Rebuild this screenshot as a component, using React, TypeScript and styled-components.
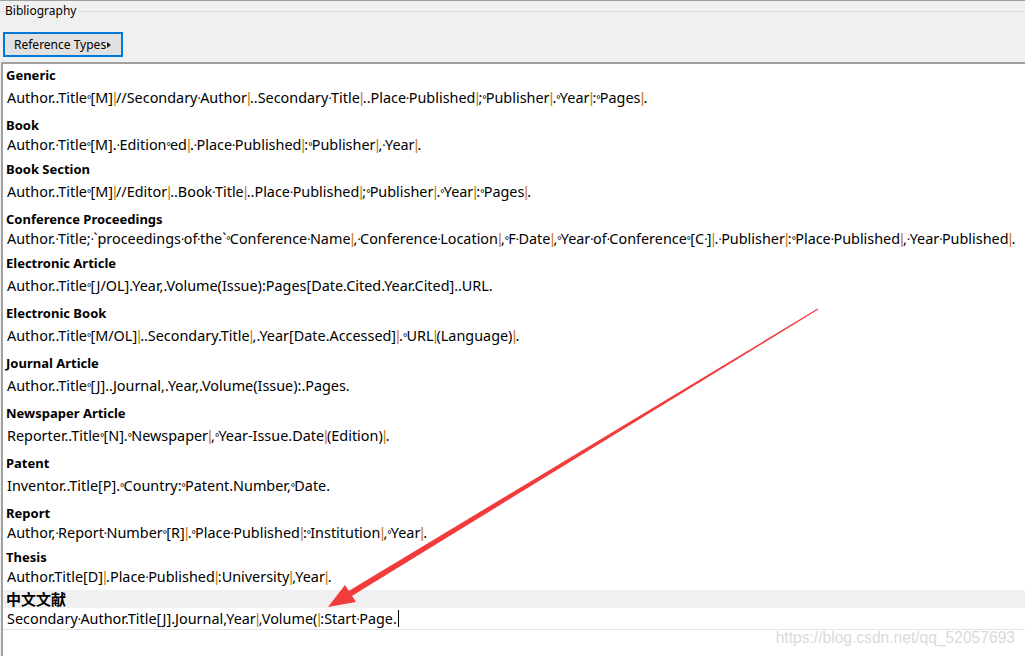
import React from "react"
import styled, { createGlobalStyle } from "styled-components"

const UI_FONT = `"Noto Sans", "Open Sans", "Noto Sans CJK SC", sans-serif`

const GlobalStyle = createGlobalStyle`
    html, body {
        margin: 0;
        padding: 0;
        background: #f0f0f0;
    }
    body {
        font-family: ${UI_FONT};
        color: #000;
    }
`

const Window = styled.div`
    position: relative;
    width: 1025px;
    height: 656px;
    overflow: hidden;
    background: #f0f0f0;
    display: flex;
    flex-direction: column;
    box-sizing: border-box;
    border-top: 1px solid #a0a0a0;
    padding-top: 1px;
`

const GroupTitle = styled.div`
    display: flex;
    align-items: center;
    height: 18px;
    padding-left: 1px;
    &:before {
        content: "";
        width: 3px;
        height: 1px;
        background: #dcdcdc;
    }
    &:after {
        content: "";
        flex: 1;
        height: 1px;
        background: #dcdcdc;
    }
`

const GroupLabel = styled.span`
    font-size: 12px;
    padding: 0 2px 0 1px;
    line-height: 18px;
`

const Toolbar = styled.div`
    display: flex;
    align-items: flex-start;
    height: 42px;
    padding: 12px 0 0 3px;
    box-sizing: border-box;
`

const TypesButton = styled.button`
    display: flex;
    align-items: center;
    width: 120px;
    height: 25px;
    padding: 0 0 0 9px;
    box-sizing: border-box;
    background: #e1e1e1;
    border: 2px solid #0078d7;
    border-radius: 0;
    font-family: ${UI_FONT};
    font-size: 12px;
    color: #000;
    cursor: pointer;
`

const Caret = styled.span`
    width: 0;
    height: 0;
    margin-left: 1px;
    border-top: 3px solid transparent;
    border-bottom: 3px solid transparent;
    border-left: 4px solid #222;
`

const Editor = styled.div`
    flex: 1;
    margin-left: 1px;
    background: #fff;
    border-top: 2px solid #a0a0a0;
    border-left: 2px solid #a0a0a0;
    padding-top: 1px;
    display: flex;
    flex-direction: column;
`

const Entry = styled.div<{ $after: number; $last?: boolean }>`
    display: flex;
    flex-direction: column;
    padding-bottom: ${({ $after }) => $after}px;
    border-bottom: ${({ $last }) => ($last ? "1px solid #e3e3e3" : "none")};
`

const Heading = styled.div<{ $highlight?: boolean }>`
    font-weight: 700;
    line-height: ${({ $highlight }) => ($highlight ? 18 : 20)}px;
    margin-top: ${({ $highlight }) => ($highlight ? 3 : 0)}px;
    padding-left: 3px;
    background: ${({ $highlight }) => ($highlight ? "#f0f0f0" : "transparent")};
    font-family: ${({ $highlight }) =>
        $highlight ? `"Noto Sans CJK SC", sans-serif` : UI_FONT};
    font-size: ${({ $highlight }) => ($highlight ? 15 : 13)}px;
`

const Body = styled.div<{ $gap: number }>`
    font-size: 14.4px;
    line-height: 20px;
    margin-top: ${({ $gap }) => $gap}px;
    padding-left: 4px;
    white-space: nowrap;
`

// field separators and visible whitespace marks, narrow like the editor draws them
const markWidth = { "|": 3, "·": 2.7, "°": 3.5 } as const
const markSize = { "|": 15, "·": 12, "°": 10 } as const
type MarkKind = keyof typeof markWidth

const Mark = styled.span<{ $kind: MarkKind }>`
    display: inline-block;
    width: ${({ $kind }) => markWidth[$kind]}px;
    text-align: center;
    overflow: visible;
    font-family: ${({ $kind }) =>
        $kind === "|" ? `"Liberation Sans", Arial, sans-serif` : UI_FONT};
    font-size: ${({ $kind }) => markSize[$kind]}px;
    color: ${({ $kind }) => ($kind === "|" ? "#c97a1c" : "#000")};
    white-space: pre;
    line-height: 1;
`

const Cursor = styled.span`
    display: inline-block;
    width: 1px;
    height: 17px;
    background: #000;
    vertical-align: -3px;
    margin-left: 1px;
`

const Watermark = styled.div`
    position: absolute;
    right: 10px;
    bottom: 9px;
    font-family: "Liberation Sans", Arial, sans-serif;
    font-size: 15.6px;
    color: #dadada;
`

const ArrowLayer = styled.svg`
    position: absolute;
    left: 0;
    top: 0;
    pointer-events: none;
`

interface Ref {
    name: string
    format: string
    gap: number
    after: number
    highlight?: boolean
    cursor?: boolean
}

const refs: Ref[] = [
    { name: "Generic", gap: 3, after: 7, format: "Author..Title°[M]|//Secondary·Author|..Secondary·Title|..Place·Published|;°Publisher|.°Year|:°Pages|." },
    { name: "Book", gap: 0, after: 4, format: "Author.·Title°[M].·Edition°ed|.·Place·Published|:°Publisher|,·Year|." },
    { name: "Book Section", gap: 3, after: 7, format: "Author..Title°[M]|//Editor|..Book·Title|..Place·Published|;°Publisher|.°Year|:°Pages|." },
    { name: "Conference Proceedings", gap: 0, after: 4, format: "Author.·Title;·`proceedings·of·the`°Conference·Name|,·Conference·Location|,°F·Date|,°Year·of·Conference°[C·]|.·Publisher|:°Place·Published|,·Year·Published|." },
    { name: "Electronic Article", gap: 3, after: 7, format: "Author..Title°[J/OL].Year,.Volume(Issue):Pages[Date.Cited.Year.Cited]..URL." },
    { name: "Electronic Book", gap: 3, after: 7, format: "Author..Title°[M/OL]|..Secondary.Title|,.Year[Date.Accessed]|.°URL|(Language)|." },
    { name: "Journal Article", gap: 3, after: 7, format: "Author..Title°[J]..Journal,.Year,.Volume(Issue):.Pages." },
    { name: "Newspaper Article", gap: 3, after: 7, format: "Reporter..Title°[N].°Newspaper|,°Year-Issue.Date|(Edition)|." },
    { name: "Patent", gap: 3, after: 7, format: "Inventor..Title[P].°Country:°Patent.Number,°Date." },
    { name: "Report", gap: 0, after: 4, format: "Author,·Report·Number°[R]|.°Place·Published|:°Institution|,°Year|." },
    { name: "Thesis", gap: 0, after: 0, format: "Author.Title[D]|.Place·Published|:University|,Year|." },
    { name: "中文文献", gap: 1, after: 0, highlight: true, cursor: true, format: "Secondary·Author.Title[J].Journal,Year|,Volume(|:Start·Page." },
]

function FormatText({ text }: { text: string }) {
    const parts = text.split(/([|·°])/)
    return (
        <>
            {parts.map((p, i) =>
                p in markWidth ? (
                    <Mark key={i} $kind={p as MarkKind}>
                        {p}
                    </Mark>
                ) : (
                    <React.Fragment key={i}>{p}</React.Fragment>
                )
            )}
        </>
    )
}

function Arrow() {
    // tapered red arrow, thin at the tail, pointing at the last template
    return (
        <ArrowLayer width="1025" height="656" viewBox="0 0 1025 656">
            <polygon
                points="818.3,308.4 351.8,595.1 348.6,589.9 817.7,307.6"
                fill="#f23b3b"
            />
            <polygon points="328,606 345,584 356,601" fill="#f23b3b" />
        </ArrowLayer>
    )
}

export default function App() {
    return (
        <Window>
            <GlobalStyle />
            <GroupTitle>
                <GroupLabel>Bibliography</GroupLabel>
            </GroupTitle>
            <Toolbar>
                <TypesButton>
                    Reference Types
                    <Caret />
                </TypesButton>
            </Toolbar>
            <Editor>
                {refs.map((r, i) => (
                    <Entry key={r.name} $after={r.after} $last={i === refs.length - 1}>
                        <Heading $highlight={r.highlight}>{r.name}</Heading>
                        <Body $gap={r.gap}>
                            <FormatText text={r.format} />
                            {r.cursor && <Cursor />}
                        </Body>
                    </Entry>
                ))}
            </Editor>
            <Watermark>https://blog.csdn.net/qq_52057693</Watermark>
            <Arrow />
        </Window>
    )
}
